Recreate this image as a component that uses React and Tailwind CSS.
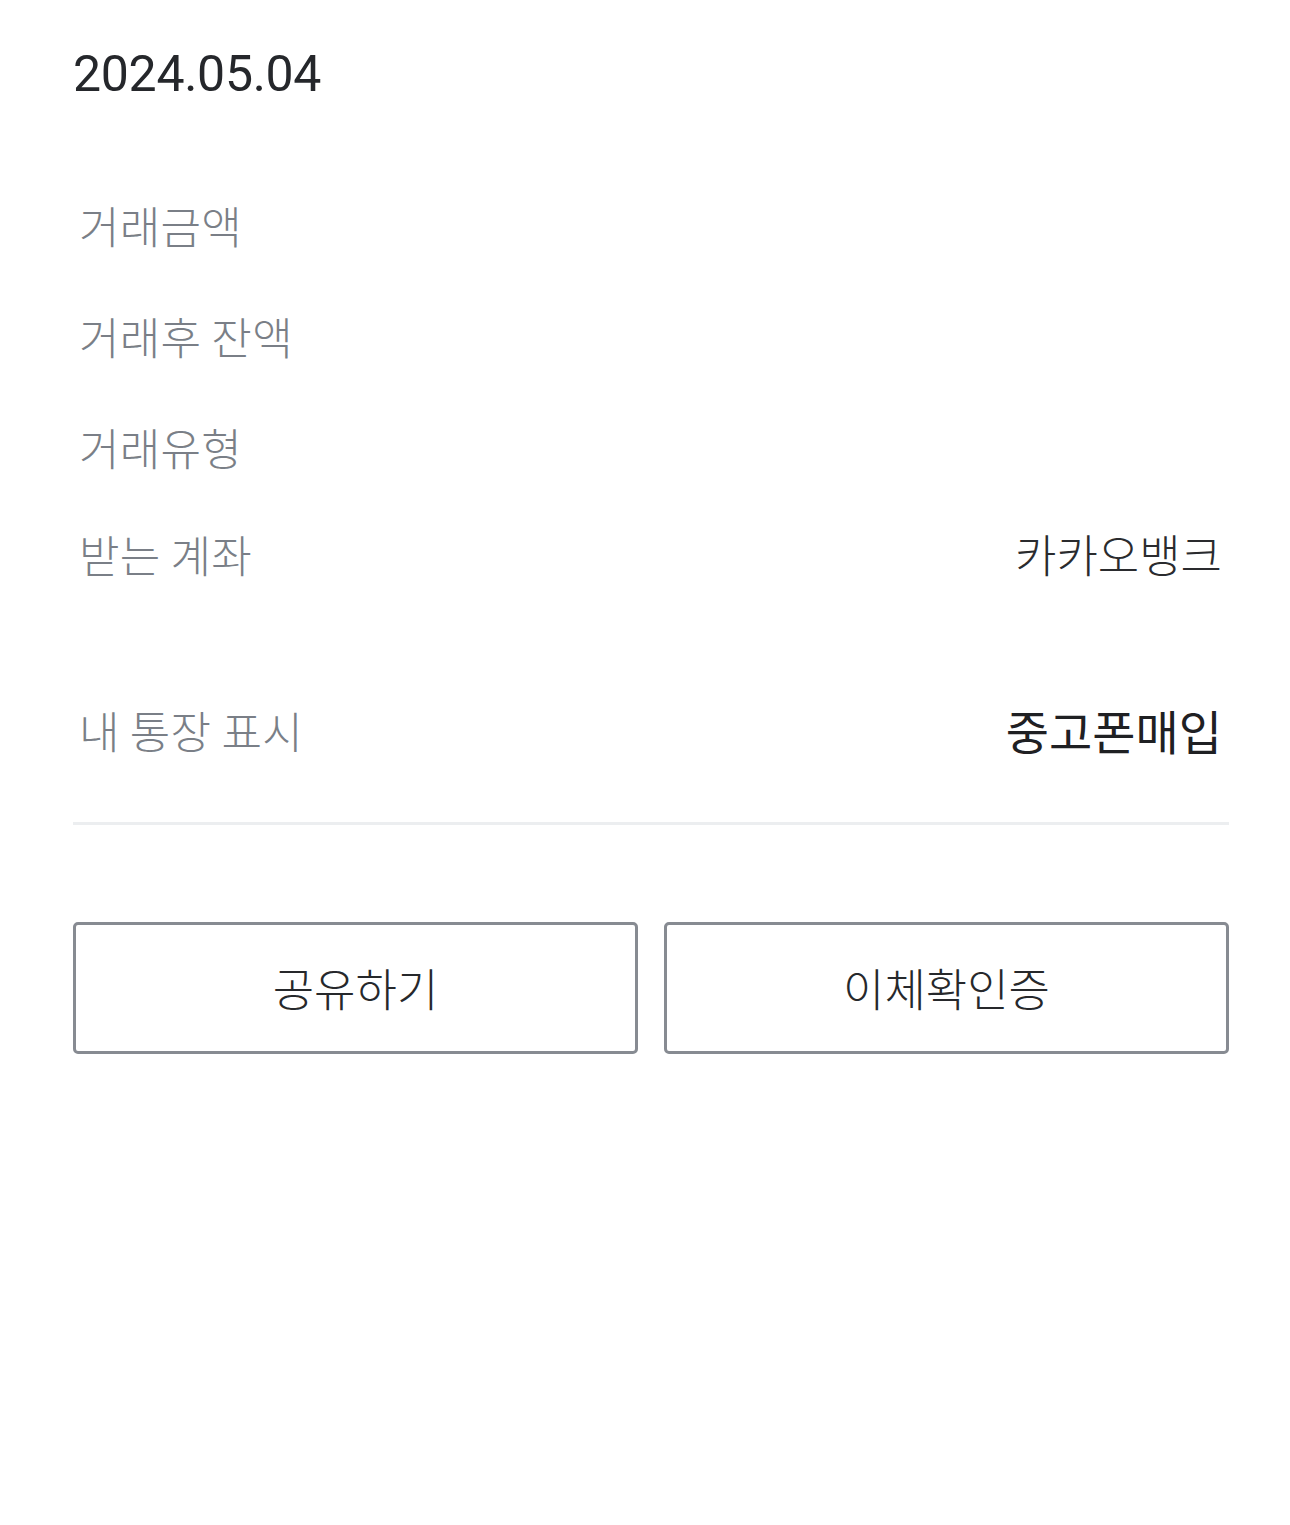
export default function App() {
    const font = { fontFamily: '"Noto Sans CJK KR", "Noto Sans", sans-serif' }

    const rows = [
        { label: '거래금액', value: '', h: 'h-[110px]' },
        { label: '거래후 잔액', value: '', h: 'h-[112px]' },
        { label: '거래유형', value: '', h: 'h-[110px]' },
        { label: '받는 계좌', value: '카카오뱅크', h: 'h-[104px]' },
    ]

    return (
        <div className="min-h-[1525px] w-full bg-white pl-[73px] pr-[61px]" style={font}>
            <div className="h-[148px] flex items-center">
                <span className="font-['Roboto'] text-[50px] text-[#25272b] tracking-[-0.3px]">2024.05.04</span>
            </div>

            <div className="mt-[22px]">
                {rows.map((row) => (
                    <div key={row.label} className={`${row.h} flex items-center justify-between`}>
                        <span className="pl-[6px] text-[44px] font-light text-[#7a7f87] tracking-[0.3px]">{row.label}</span>
                        <span className="pr-[7px] text-[45px] font-light text-[#2a2b2e] tracking-[0px]">{row.value}</span>
                    </div>
                ))}

                <div className="mt-[54px] h-[140px] flex items-center justify-between">
                    <span className="pl-[6px] text-[44px] font-light text-[#7a7f87] tracking-[0.3px]">내 통장 표시</span>
                    <span className="pr-[7px] text-[47px] text-[#1f2023] tracking-[0px]">중고폰매입</span>
                </div>
            </div>

            <div className="mt-[22px] h-[3px] bg-[#eceef0]" />

            <div className="mt-[97px] flex gap-[26px]">
                <button className="flex-1 h-[132px] border-[3px] border-[#878b92] rounded-[5px] bg-white text-[45px] font-light text-[#26282b] tracking-[0px]">
                    공유하기
                </button>
                <button className="flex-1 h-[132px] border-[3px] border-[#878b92] rounded-[5px] bg-white text-[45px] font-light text-[#26282b] tracking-[0px]">
                    이체확인증
                </button>
            </div>
        </div>
    )
}
